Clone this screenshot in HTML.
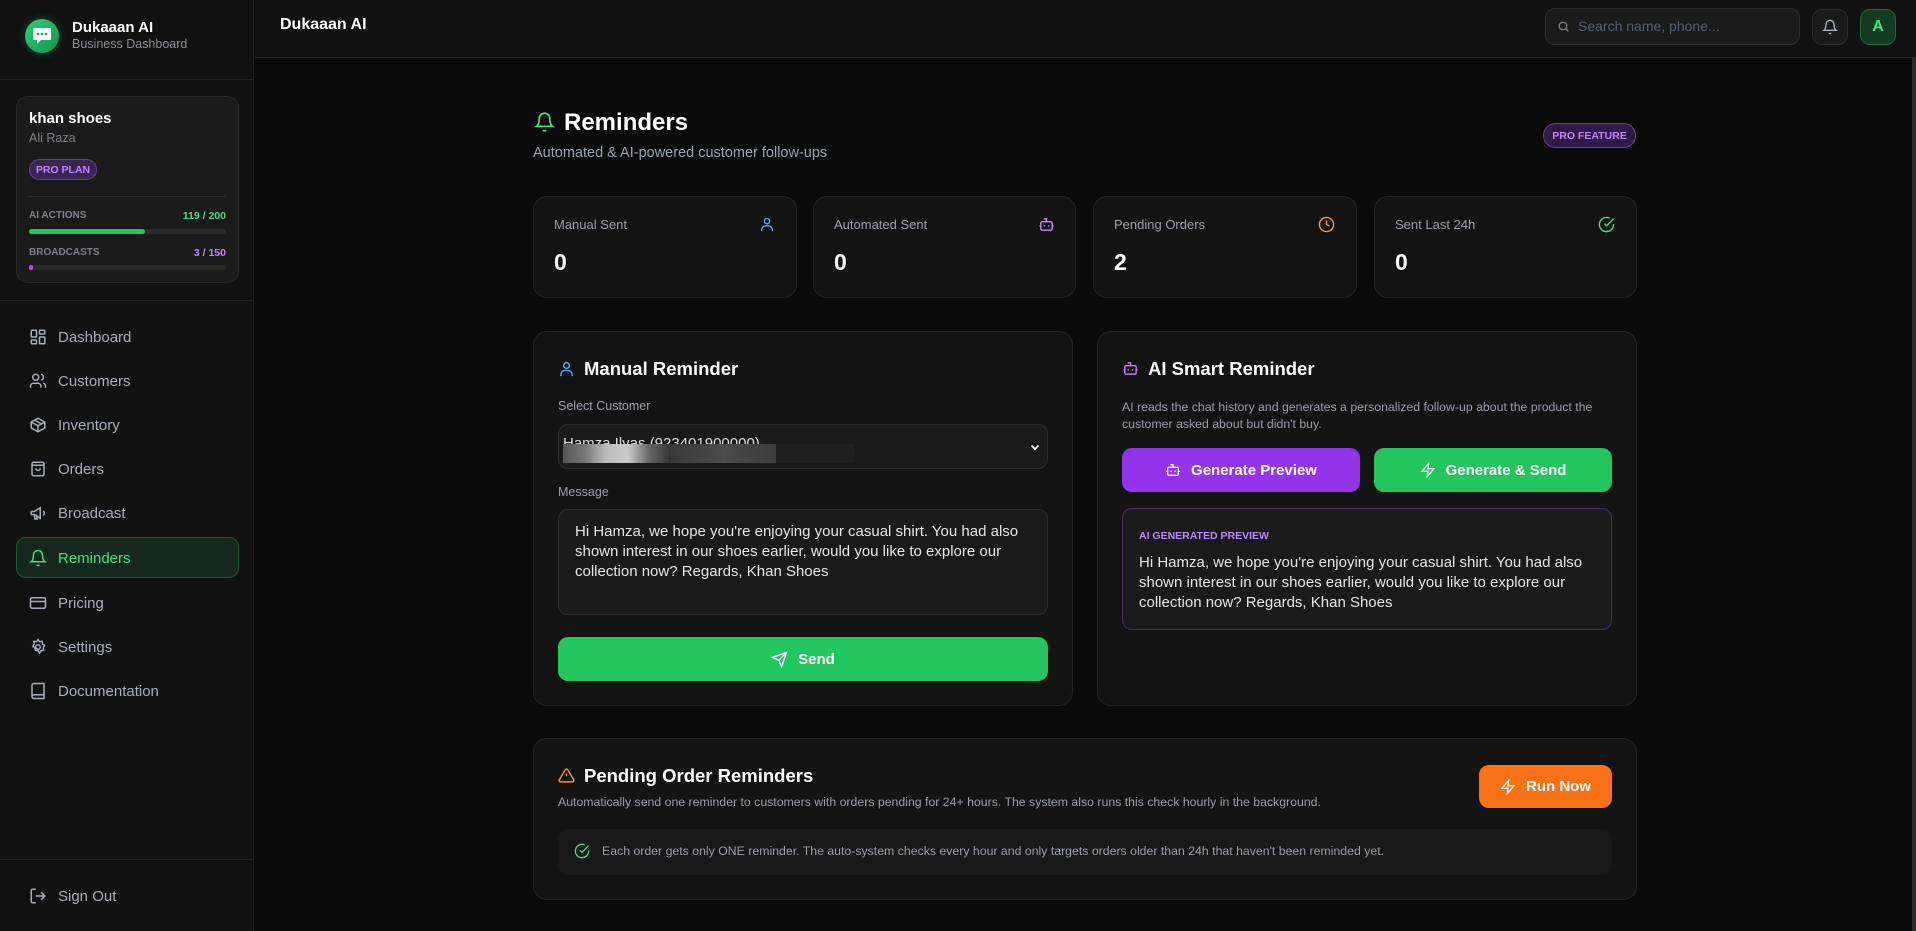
<!DOCTYPE html>
<html><head><meta charset="utf-8"><style>
*{box-sizing:border-box;margin:0;padding:0}
body{width:1916px;height:931px;overflow:hidden;background:#0a0a0a;font-family:"Liberation Sans",sans-serif;color:#fff;position:relative}
.a{position:absolute}
.sb{left:0;top:0;width:254px;height:931px;background:#111111;border-right:1px solid #222}
.hl{height:1px;background:#262626}
.nav{left:29px;width:200px;height:22px;display:flex;align-items:center;font-size:15px;color:#a8adb8}
.nav svg{width:18px;height:18px;margin-right:11px;flex:none}
.card{background:#131313;border:1px solid #262626;border-radius:14px}
.lbl{font-size:13px;color:#9a9ea8}
.val{font-size:23px;font-weight:bold}
.btn{display:flex;align-items:center;justify-content:center;border-radius:10px;font-weight:bold;font-size:15px;color:#fff}
.btn svg{margin-right:10px}
.txt{font-size:15px;line-height:20px;color:#e6e6e6}
.badge{display:flex;align-items:center;justify-content:center;font-weight:bold;color:#c084fc}
</style></head><body>
<div class="a sb"></div>
<div class="a" style="left:25px;top:19px;width:34px;height:34px;border-radius:50%;background:linear-gradient(135deg,#2fd37a,#15914a);box-shadow:0 0 10px rgba(34,197,94,.3)"></div>
<svg class="a" style="left:31px;top:25px" width="22" height="22" viewBox="0 0 22 22"><path d="M3 3h16a1 1 0 0 1 1 1v10a1 1 0 0 1-1 1H10l-4 4v-4H3a1 1 0 0 1-1-1V4a1 1 0 0 1 1-1z" fill="#fff"/><circle cx="7" cy="9" r="1.3" fill="#16a34a"/><circle cx="11" cy="9" r="1.3" fill="#16a34a"/><circle cx="15" cy="9" r="1.3" fill="#16a34a"/></svg>
<div class="a" style="left:72px;top:19px;font-size:15px;font-weight:bold">Dukaaan AI</div>
<div class="a" style="left:72px;top:37px;font-size:12.5px;color:#8a8d94">Business Dashboard</div>
<div class="a hl" style="left:0;top:79px;width:254px"></div>
<div class="a" style="left:16px;top:96px;width:223px;height:187px;background:#1a1a1a;border:1px solid #2a2a2a;border-radius:12px"></div>
<div class="a" style="left:29px;top:110px;font-size:15px;font-weight:bold">khan shoes</div>
<div class="a" style="left:29px;top:131px;font-size:12.5px;color:#7d8088">Ali Raza</div>
<div class="a badge" style="left:29px;top:159px;width:68px;height:21px;border-radius:11px;background:#3a2450;border:1px solid #6a3f99;font-size:10.5px">PRO PLAN</div>
<div class="a hl" style="left:29px;top:196px;width:197px;background:#2a2a2a"></div>
<div class="a" style="left:29px;top:210px;font-size:10px;font-weight:bold;color:#7d8088">AI ACTIONS</div>
<div class="a" style="left:150px;top:210px;width:76px;text-align:right;font-size:10.5px;font-weight:bold;color:#4ade80">119 / 200</div>
<div class="a" style="left:29px;top:229px;width:197px;height:5px;border-radius:3px;background:#2a2a2a"><div style="width:59%;height:5px;border-radius:3px;background:#22c55e"></div></div>
<div class="a" style="left:29px;top:247px;font-size:10px;font-weight:bold;color:#7d8088">BROADCASTS</div>
<div class="a" style="left:150px;top:247px;width:76px;text-align:right;font-size:10.5px;font-weight:bold;color:#c084fc">3 / 150</div>
<div class="a" style="left:29px;top:265px;width:197px;height:5px;border-radius:3px;background:#2a2a2a"><div style="width:4px;height:5px;border-radius:3px;background:#a855f7"></div></div>
<div class="a hl" style="left:0;top:300px;width:254px"></div>

<div class="a nav" style="top:326px"><svg viewBox="0 0 24 24" fill="none" stroke="#a8adb8" stroke-width="2"><rect x="3" y="3" width="7" height="9" rx="1"/><rect x="14" y="3" width="7" height="5" rx="1"/><rect x="14" y="12" width="7" height="9" rx="1"/><rect x="3" y="16" width="7" height="5" rx="1"/></svg>Dashboard</div>
<div class="a nav" style="top:370px"><svg viewBox="0 0 24 24" fill="none" stroke="#a8adb8" stroke-width="2"><circle cx="9" cy="7" r="4"/><path d="M2 21v-2a4 4 0 0 1 4-4h6a4 4 0 0 1 4 4v2M16 3.1a4 4 0 0 1 0 7.8M22 21v-2a4 4 0 0 0-3-3.9"/></svg>Customers</div>
<div class="a nav" style="top:414px"><svg viewBox="0 0 24 24" fill="none" stroke="#a8adb8" stroke-width="2"><path d="M21 8l-9-5-9 5v8l9 5 9-5z"/><path d="M3 8l9 5 9-5M12 13v8M7.5 5.5l9 5"/></svg>Inventory</div>
<div class="a nav" style="top:458px"><svg viewBox="0 0 24 24" fill="none" stroke="#a8adb8" stroke-width="2"><rect x="4" y="3" width="16" height="18" rx="2"/><path d="M4 7h16M9 11a3 3 0 0 0 6 0"/></svg>Orders</div>
<div class="a nav" style="top:502px"><svg viewBox="0 0 24 24" fill="none" stroke="#a8adb8" stroke-width="2"><path d="M3 10v4h4l8 5V5L7 10z"/><path d="M7 14l1 6h3l-1-6M19 9a4 4 0 0 1 0 6"/></svg>Broadcast</div>
<div class="a" style="left:16px;top:537px;width:223px;height:41px;border-radius:10px;background:#14291b;border:1px solid #1f5a33"></div>
<div class="a nav" style="top:547px;color:#4ade80"><svg viewBox="0 0 24 24" fill="none" stroke="#4ade80" stroke-width="2"><path d="M6 8a6 6 0 0 1 12 0c0 7 3 9 3 9H3s3-2 3-9M10.3 21a1.9 1.9 0 0 0 3.4 0"/></svg>Reminders</div>
<div class="a nav" style="top:592px"><svg viewBox="0 0 24 24" fill="none" stroke="#a8adb8" stroke-width="2"><rect x="2" y="5" width="20" height="14" rx="2"/><path d="M2 10h20"/></svg>Pricing</div>
<div class="a nav" style="top:636px"><svg viewBox="0 0 24 24" fill="none" stroke="#a8adb8" stroke-width="2"><circle cx="12" cy="12" r="3"/><path d="M12 2l2 3 3.5-.5.5 3.5 3 2-2 3 .5 3.5-3.5.5-2 3-2-3-3.5-.5-.5-3.5-3-2 2-3L6.5 4.5 10 5z"/></svg>Settings</div>
<div class="a nav" style="top:680px"><svg viewBox="0 0 24 24" fill="none" stroke="#a8adb8" stroke-width="2"><path d="M4 19.5v-15A2.5 2.5 0 0 1 6.5 2H20v20H6.5a2.5 2.5 0 0 1 0-5H20"/></svg>Documentation</div>
<div class="a hl" style="left:0;top:859px;width:254px"></div>
<div class="a nav" style="top:885px"><svg viewBox="0 0 24 24" fill="none" stroke="#a8adb8" stroke-width="2"><path d="M9 21H5a2 2 0 0 1-2-2V5a2 2 0 0 1 2-2h4M16 17l5-5-5-5M21 12H9"/></svg>Sign Out</div>

<div class="a" style="left:255px;top:0;width:1661px;height:58px;background:#111;border-bottom:1px solid #262626"></div>
<div class="a" style="left:280px;top:16px;font-size:16px;font-weight:bold">Dukaaan AI</div>
<div class="a" style="left:1545px;top:8px;width:255px;height:37px;border-radius:10px;background:#1a1a1a;border:1px solid #2e2e2e"></div>
<svg class="a" style="left:1557px;top:20px" width="13" height="13" viewBox="0 0 24 24" fill="none" stroke="#7d8088" stroke-width="2.5"><circle cx="11" cy="11" r="7"/><path d="M21 21l-5-5"/></svg>
<div class="a" style="left:1578px;top:18px;font-size:14px;color:#5b6070">Search name, phone...</div>
<div class="a" style="left:1812px;top:9px;width:36px;height:36px;border-radius:10px;background:#1a1a1a;border:1px solid #2e2e2e"></div>
<svg class="a" style="left:1822px;top:19px" width="16" height="16" viewBox="0 0 24 24" fill="none" stroke="#b0b4bc" stroke-width="2"><path d="M6 8a6 6 0 0 1 12 0c0 7 3 9 3 9H3s3-2 3-9M10.3 21a1.9 1.9 0 0 0 3.4 0"/></svg>
<div class="a" style="left:1860px;top:9px;width:36px;height:36px;border-radius:10px;background:#153a22;border:1px solid #1f6b3a;color:#4ade80;font-weight:bold;font-size:16px;text-align:center;line-height:34px">A</div>
<div class="a" style="left:1912px;top:58px;width:4px;height:873px;background:#2a2a2a"></div>

<svg class="a" style="left:534px;top:111px" width="21" height="22" viewBox="0 0 24 24" fill="none" stroke="#4ade80" stroke-width="2"><path d="M6 8a6 6 0 0 1 12 0c0 7 3 9 3 9H3s3-2 3-9M10.3 21a1.9 1.9 0 0 0 3.4 0"/></svg>
<div class="a" style="left:564px;top:109px;font-size:24px;font-weight:bold">Reminders</div>
<div class="a" style="left:533px;top:145px;font-size:14.5px;color:#9aa2b0">Automated &amp; AI-powered customer follow-ups</div>
<div class="a badge" style="left:1543px;top:123px;width:93px;height:25px;border-radius:13px;background:#2d1a45;border:1px solid #6a3f99;font-size:10.5px">PRO FEATURE</div>

<div class="a card" style="left:533px;top:196px;width:264px;height:102px"></div>
<div class="a lbl" style="left:554px;top:217px">Manual Sent</div>
<div class="a val" style="left:554px;top:249px">0</div>
<svg class="a" style="left:759px;top:216px" width="16" height="17" viewBox="0 0 24 24" fill="none" stroke="#60a5fa" stroke-width="2"><circle cx="12" cy="7" r="4"/><path d="M4 22v-2a6 6 0 0 1 6-6h4a6 6 0 0 1 6 6v2"/></svg>
<div class="a card" style="left:813px;top:196px;width:263px;height:102px"></div>
<div class="a lbl" style="left:834px;top:217px">Automated Sent</div>
<div class="a val" style="left:834px;top:249px">0</div>
<svg class="a" style="left:1038px;top:216px" width="17" height="17" viewBox="0 0 24 24" fill="none" stroke="#c084fc" stroke-width="2"><rect x="4" y="8" width="16" height="12" rx="2"/><path d="M12 8V4H8M2 14h2M20 14h2M9 13v2M15 13v2"/></svg>
<div class="a card" style="left:1093px;top:196px;width:264px;height:102px"></div>
<div class="a lbl" style="left:1114px;top:217px">Pending Orders</div>
<div class="a val" style="left:1114px;top:249px">2</div>
<svg class="a" style="left:1318px;top:216px" width="17" height="17" viewBox="0 0 24 24" fill="none" stroke="#fb923c" stroke-width="2"><circle cx="12" cy="12" r="10"/><path d="M12 6v6l4 2"/></svg>
<div class="a card" style="left:1374px;top:196px;width:263px;height:102px"></div>
<div class="a lbl" style="left:1395px;top:217px">Sent Last 24h</div>
<div class="a val" style="left:1395px;top:249px">0</div>
<svg class="a" style="left:1598px;top:216px" width="17" height="17" viewBox="0 0 24 24" fill="none" stroke="#4ade80" stroke-width="2"><path d="M22 11.1V12a10 10 0 1 1-5.9-9.1"/><path d="M22 4L12 14l-3-3"/></svg>

<div class="a card" style="left:533px;top:331px;width:540px;height:375px"></div>
<svg class="a" style="left:558px;top:360px" width="17" height="18" viewBox="0 0 24 24" fill="none" stroke="#60a5fa" stroke-width="2"><circle cx="12" cy="7" r="4"/><path d="M4 22v-2a6 6 0 0 1 6-6h4a6 6 0 0 1 6 6v2"/></svg>
<div class="a" style="left:584px;top:358px;font-size:18.5px;font-weight:bold">Manual Reminder</div>
<div class="a" style="left:558px;top:399px;font-size:12.5px;color:#9a9ea8">Select Customer</div>
<div class="a" style="left:558px;top:424px;width:490px;height:45px;border-radius:10px;background:#1a1a1a;border:1px solid #2e2e2e;overflow:hidden"></div>
<div class="a" style="left:563px;top:432px;width:210px;height:12px;overflow:hidden;font-size:15px;line-height:24px;color:#ddd">  Hamza Ilyas (923401900000)</div>
<div class="a" style="left:563px;top:444px;width:108px;height:19px;background:linear-gradient(90deg,#555,#777 20%,#bbb 40%,#ccc 60%,#666 80%,#333)"></div>
<div class="a" style="left:671px;top:444px;width:105px;height:19px;background:linear-gradient(90deg,#3a3a3a,#4a4a4a 50%,#3c3c3c)"></div>
<div class="a" style="left:776px;top:444px;width:78px;height:19px;background:#1f1f1f"></div>
<svg class="a" style="left:1029px;top:441px" width="12" height="12" viewBox="0 0 24 24" fill="none" stroke="#fff" stroke-width="3.5"><path d="M5 9l7 7 7-7"/></svg>
<div class="a" style="left:558px;top:485px;font-size:12.5px;color:#9a9ea8">Message</div>
<div class="a" style="left:558px;top:509px;width:490px;height:106px;border-radius:10px;background:#1a1a1a;border:1px solid #2e2e2e"></div>
<div class="a txt" style="left:575px;top:522px;width:460px">Hi Hamza, we hope you're enjoying your casual shirt. You had also shown interest in our shoes earlier, would you like to explore our collection now? Regards, Khan Shoes</div>
<div class="a btn" style="left:558px;top:637px;width:490px;height:44px;background:#22c55e"><svg width="17" height="17" viewBox="0 0 24 24" fill="none" stroke="#fff" stroke-width="2"><path d="M22 2L11 13M22 2l-7 20-4-9-9-4z"/></svg>Send</div>

<div class="a card" style="left:1097px;top:331px;width:540px;height:375px"></div>
<svg class="a" style="left:1122px;top:360px" width="17" height="17" viewBox="0 0 24 24" fill="none" stroke="#c084fc" stroke-width="2"><rect x="4" y="8" width="16" height="12" rx="2"/><path d="M12 8V4H8M2 14h2M20 14h2M9 13v2M15 13v2"/></svg>
<div class="a" style="left:1148px;top:358px;font-size:18.5px;font-weight:bold">AI Smart Reminder</div>
<div class="a" style="left:1122px;top:399px;width:490px;font-size:12.3px;line-height:17px;color:#9a9ea8">AI reads the chat history and generates a personalized follow-up about the product the customer asked about but didn't buy.</div>
<div class="a btn" style="left:1122px;top:448px;width:238px;height:44px;background:#9333ea"><svg width="16" height="16" viewBox="0 0 24 24" fill="none" stroke="#fff" stroke-width="2"><rect x="4" y="8" width="16" height="12" rx="2"/><path d="M12 8V4H8M2 14h2M20 14h2M9 13v2M15 13v2"/></svg>Generate Preview</div>
<div class="a btn" style="left:1374px;top:448px;width:238px;height:44px;background:#22c55e"><svg width="16" height="16" viewBox="0 0 24 24" fill="none" stroke="#fff" stroke-width="2"><path d="M13 2L3 14h9l-1 8 10-12h-9z"/></svg>Generate &amp; Send</div>
<div class="a" style="left:1122px;top:508px;width:490px;height:122px;border-radius:10px;background:#1a1a1a;border:1px solid #4a2a6e"></div>
<div class="a" style="left:1139px;top:530px;font-size:10.5px;font-weight:bold;color:#c084fc">AI GENERATED PREVIEW</div>
<div class="a txt" style="left:1139px;top:553px;width:460px">Hi Hamza, we hope you're enjoying your casual shirt. You had also shown interest in our shoes earlier, would you like to explore our collection now? Regards, Khan Shoes</div>

<div class="a card" style="left:533px;top:738px;width:1104px;height:162px"></div>
<svg class="a" style="left:558px;top:767px" width="17" height="17" viewBox="0 0 24 24" fill="none" stroke="#fb923c" stroke-width="2"><path d="M10.3 3.9L1.8 18a2 2 0 0 0 1.7 3h17a2 2 0 0 0 1.7-3L13.7 3.9a2 2 0 0 0-3.4 0zM12 9v4M12 17h.01"/></svg>
<div class="a" style="left:584px;top:765px;font-size:18.5px;font-weight:bold">Pending Order Reminders</div>
<div class="a" style="left:558px;top:795px;font-size:12.3px;color:#9a9ea8">Automatically send one reminder to customers with orders pending for 24+ hours. The system also runs this check hourly in the background.</div>
<div class="a btn" style="left:1479px;top:765px;width:133px;height:43px;background:#f97316"><svg width="16" height="16" viewBox="0 0 24 24" fill="none" stroke="#fff" stroke-width="2"><path d="M13 2L3 14h9l-1 8 10-12h-9z"/></svg>Run Now</div>
<div class="a" style="left:558px;top:829px;width:1054px;height:46px;border-radius:10px;background:#181818"></div>
<svg class="a" style="left:574px;top:843px" width="16" height="16" viewBox="0 0 24 24" fill="none" stroke="#4ade80" stroke-width="2"><path d="M22 11.1V12a10 10 0 1 1-5.9-9.1"/><path d="M22 4L12 14l-3-3"/></svg>
<div class="a" style="left:602px;top:844px;font-size:12.3px;color:#9a9ea8">Each order gets only ONE reminder. The auto-system checks every hour and only targets orders older than 24h that haven't been reminded yet.</div>
</body></html>
